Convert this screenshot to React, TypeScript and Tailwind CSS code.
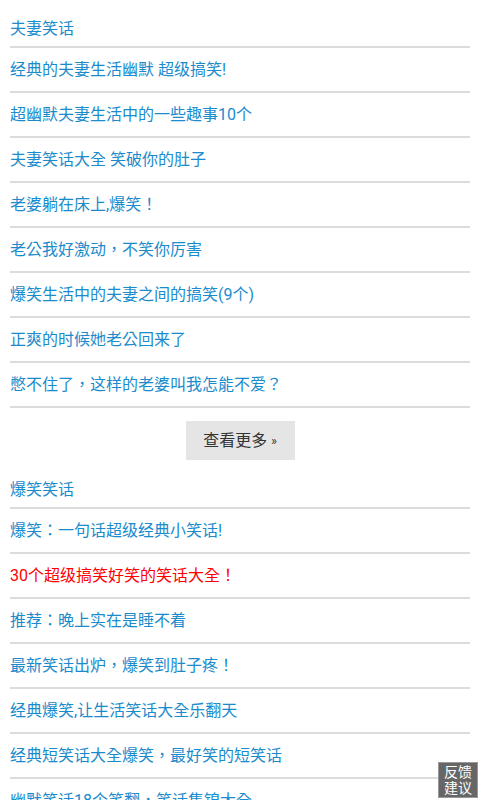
import React from "react";

const sec1 = [
  "经典的夫妻生活幽默 超级搞笑!",
  "超幽默夫妻生活中的一些趣事10个",
  "夫妻笑话大全 笑破你的肚子",
  "老婆躺在床上,爆笑！",
  "老公我好激动，不笑你厉害",
  "爆笑生活中的夫妻之间的搞笑(9个)",
  "正爽的时候她老公回来了",
  "憋不住了，这样的老婆叫我怎能不爱？",
];

const sec2: { t: string; red?: boolean }[] = [
  { t: "爆笑：一句话超级经典小笑话!" },
  { t: "30个超级搞笑好笑的笑话大全！", red: true },
  { t: "推荐：晚上实在是睡不着" },
  { t: "最新笑话出炉，爆笑到肚子疼！" },
  { t: "经典爆笑,让生活笑话大全乐翻天" },
  { t: "经典短笑话大全爆笑，最好笑的短笑话" },
  { t: "幽默笑话18个笑翻，笑话集锦大全" },
];

function Title({ text }: { text: string }) {
  return (
    <div className="h-[36px] flex items-center text-[16px] text-[#1a8bcc] border-b-2 border-[#dcdcdc]">
      {text}
    </div>
  );
}

function Row({ text, red }: { text: string; red?: boolean }) {
  return (
    <div
      className={`h-[45px] flex items-center text-[16px] whitespace-nowrap border-b-2 border-[#dcdcdc] ${
        red ? "text-[#ff0000]" : "text-[#1a8bcc]"
      }`}
    >
      {text}
    </div>
  );
}

export default function App() {
  return (
    <div
      className="relative w-[480px] h-[800px] overflow-hidden bg-white"
      style={{ fontFamily: 'Roboto, "Noto Sans CJK TC", "Noto Sans CJK SC", sans-serif' }}
    >
      <div className="px-[10px] pt-[12px]">
        <Title text="夫妻笑话" />
        {sec1.map((t) => (
          <Row key={t} text={t} />
        ))}
        <div className="flex justify-center py-[13px]">
          <div className="w-[109px] h-[39px] bg-[#e5e5e5] flex items-center justify-center text-[16px] text-[#333]">
            查看更多<span className="text-[12px] ml-[4px]">»</span>
          </div>
        </div>
        <Title text="爆笑笑话" />
        {sec2.map((r) => (
          <Row key={r.t} text={r.t} red={r.red} />
        ))}
      </div>
      <div className="absolute right-[2px] top-[762px] w-[40px] h-[36px] bg-[#666] border border-[#999] text-white text-[14px] leading-[16px] flex items-center justify-center text-center">
        <span>
          反馈
          <br />
          建议
        </span>
      </div>
    </div>
  );
}
